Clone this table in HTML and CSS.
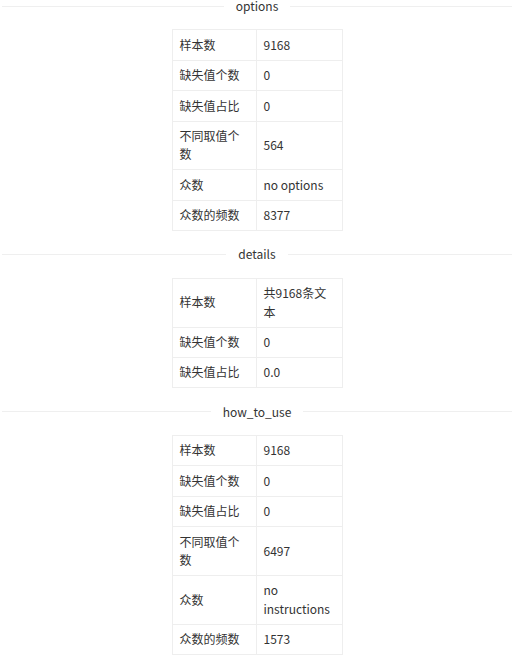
FILE: index.html
```html
<!DOCTYPE html>
<html>
<head>
<meta charset="utf-8">
<link rel="stylesheet" href="styles.css">
</head>
<body>
<div class="wrap">
  <div class="divider"><span class="divider-text">options</span></div>
  <table class="stats">
    <colgroup><col class="c1"><col class="c2"></colgroup>
    <tr><td>样本数</td><td>9168</td></tr>
    <tr><td>缺失值个数</td><td>0</td></tr>
    <tr><td>缺失值占比</td><td>0</td></tr>
    <tr><td>不同取值个数</td><td>564</td></tr>
    <tr><td>众数</td><td>no options</td></tr>
    <tr><td>众数的频数</td><td>8377</td></tr>
  </table>

  <div class="divider"><span class="divider-text">details</span></div>
  <table class="stats">
    <colgroup><col class="c1"><col class="c2"></colgroup>
    <tr><td>样本数</td><td>共9168条文本</td></tr>
    <tr><td>缺失值个数</td><td>0</td></tr>
    <tr><td>缺失值占比</td><td>0.0</td></tr>
  </table>

  <div class="divider"><span class="divider-text">how_to_use</span></div>
  <table class="stats">
    <colgroup><col class="c1"><col class="c2"></colgroup>
    <tr><td>样本数</td><td>9168</td></tr>
    <tr><td>缺失值个数</td><td>0</td></tr>
    <tr><td>缺失值占比</td><td>0</td></tr>
    <tr><td>不同取值个数</td><td>6497</td></tr>
    <tr><td>众数</td><td>no instructions</td></tr>
    <tr><td>众数的频数</td><td>1573</td></tr>
  </table>
</div>
</body>
</html>
```

FILE: styles.css
```css
html, body {
  margin: 0;
  padding: 0;
  background: #ffffff;
}

body {
  font-family: "Noto Sans CJK SC", "Noto Sans", sans-serif;
  font-size: 12px;
  color: #333333;
}

.wrap {
  padding: 0 2px;
  display: flex;
  flex-direction: column;
  align-items: center;
  gap: 17.3px;
}

.divider {
  align-self: stretch;
  display: flex;
  align-items: center;
  height: 12px;
  line-height: 12px;
}

.divider::before,
.divider::after {
  content: "";
  flex: 1;
  border-top: 1px solid #efefef;
}

.divider-text {
  padding: 0 12px;
  white-space: nowrap;
  color: #333333;
}

.stats {
  border-collapse: collapse;
  table-layout: fixed;
  width: 170px;
}

.stats .c1 { width: 84px; }
.stats .c2 { width: 86px; }

.stats td {
  border: 1px solid #eeeeee;
  padding: 5.5px 6px 5.5px 7px;
  line-height: 18.4px;
  vertical-align: middle;
  word-break: break-word;
}
```
